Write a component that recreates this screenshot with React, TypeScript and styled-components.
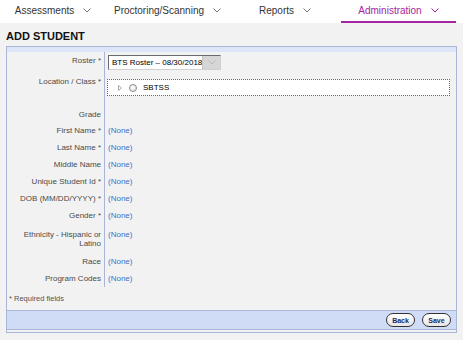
import * as React from 'react';
import styled, { createGlobalStyle } from 'styled-components';

const GlobalStyle = createGlobalStyle`
  html, body {
    margin: 0;
    padding: 0;
    background: #f2f2f2;
  }
  body {
    font-family: "Liberation Sans", Arial, sans-serif;
    color: #333;
  }
`;

const Nav = styled('nav')`
  display: grid;
  grid-template-columns: 106px 123px 112px 115px 7px;
  height: 23px;
  background: #fff;
`;

const NavItem = styled('div')<{ $active?: boolean }>`
  display: flex;
  align-items: center;
  justify-content: center;
  gap: 9px;
  box-sizing: border-box;
  padding-bottom: 1px;
  font-size: 10px;
  color: ${p => (p.$active ? '#a4259f' : '#333')};
  border-bottom: 2px solid ${p => (p.$active ? '#a4259f' : 'transparent')};
`;

const Title = styled('h1')`
  margin: 0;
  padding: 6px 6px 0;
  font-size: 11px;
  line-height: 14px;
  font-weight: bold;
  color: #111;
`;

const Panel = styled('div')`
  margin: 3px 0 0 6px;
  width: 451px;
  box-sizing: border-box;
  border: 1px solid #a9b6d6;
`;

const TopStrip = styled('div')`
  height: 5px;
  background: #dde6f8;
`;

const Row = styled('div')`
  display: flex;
`;

const Label = styled('div')<{ $pt: number }>`
  width: 97px;
  flex: none;
  box-sizing: border-box;
  padding: ${p => p.$pt}px 3px 0 4px;
  text-align: right;
  font-size: 8px;
  line-height: 9px;
  color: #4a4a4a;
`;

const Value = styled('div')<{ $pt: number; $pb: number }>`
  flex: 1;
  min-height: 9px;
  border-left: 1px solid #a9b6d6;
  padding: ${p => p.$pt}px 0 ${p => p.$pb}px 3px;
  font-size: 8px;
  line-height: 9px;
  color: #3b73c8;
`;

const RosterSelect = styled('div')`
  display: flex;
  width: 113px;
  height: 15px;
  box-sizing: border-box;
  border: 1px solid;
  border-color: #6a6a6a #d0d0d0 #d0d0d0 #6a6a6a;
  background: #fff;
`;

const SelectText = styled('div')`
  flex: 1;
  padding-left: 3px;
  font-size: 8px;
  line-height: 13px;
  color: #000;
  white-space: nowrap;
`;

const DropButton = styled('div')`
  width: 18px;
  display: flex;
  align-items: center;
  justify-content: center;
  background: #d6d6d6;
  border-left: 1px solid #c4c4c4;
`;

const LocationBox = styled('div')`
  display: flex;
  align-items: center;
  height: 17px;
  box-sizing: border-box;
  margin: 0 6px 0 -1px;
  padding-left: 10px;
  gap: 4px;
  border: 1px dotted #666;
  background: #fff;
  font-size: 8px;
  color: #000;
`;

const Circle = styled('span')`
  width: 6px;
  height: 6px;
  border-radius: 50%;
  border: 1px solid #8a8a8a;
  background: radial-gradient(circle at 40% 40%, #fff, #ddd);
  margin: 0 2px 0 3px;
`;

const Note = styled('div')`
  margin: 7px 0 7px;
  padding-left: 2px;
  font-size: 7.5px;
  line-height: 9px;
  color: #555;
`;

const Footer = styled('div')`
  display: flex;
  justify-content: flex-end;
  align-items: center;
  gap: 7px;
  height: 18px;
  padding-right: 5px;
  margin-bottom: 2px;
  background: #d0dcf5;
  border-top: 1px solid #a9b6d6;
  border-bottom: 1px solid #a9b6d6;
`;

const Button = styled('button')`
  width: 29px;
  height: 14px;
  padding: 0;
  border: 1px solid #333;
  border-radius: 8px;
  background: linear-gradient(#ffffff, #e6e6e6);
  font-family: "Liberation Sans", Arial, sans-serif;
  font-size: 7px;
  font-weight: bold;
  color: #1b2a6b;
`;

const Chevron = ({ color }: { color: string }) => (
  <svg width="8" height="5" viewBox="0 0 8 5">
    <polyline points="0.5,0.5 4,4 7.5,0.5" fill="none" stroke={color} strokeWidth="1" />
  </svg>
);

const navItems = ['Assessments', 'Proctoring/Scanning', 'Reports', 'Administration'];

const fields: [string, number, number, number][] = [
  ['First Name *', 4, 4, 4],
  ['Last Name *', 4, 4, 4],
  ['Middle Name', 4, 4, 4],
  ['Unique Student Id *', 4, 4, 4],
  ['DOB (MM/DD/YYYY) *', 4, 4, 4],
  ['Gender *', 4, 4, 4],
  ['Ethnicity - Hispanic or Latino', 6, 6, 14],
  ['Race', 4, 4, 4],
  ['Program Codes', 4, 4, 4],
];

const App = () => {
  return (
    <>
      <GlobalStyle />
      <Nav>
        {navItems.map((name, i) => (
          <NavItem key={name} $active={i === 3}>
            {name}
            <Chevron color={i === 3 ? '#a4259f' : '#777'} />
          </NavItem>
        ))}
      </Nav>
      <Title>ADD STUDENT</Title>
      <Panel>
        <TopStrip />
        <Row>
          <Label $pt={4}>Roster *</Label>
          <Value $pt={3} $pb={2}>
            <RosterSelect>
              <SelectText>BTS Roster – 08/30/2018</SelectText>
              <DropButton>
                <Chevron color="#b8b8b8" />
              </DropButton>
            </RosterSelect>
          </Value>
        </Row>
        <Row>
          <Label $pt={5}>Location / Class *</Label>
          <Value $pt={7} $pb={10}>
            <LocationBox>
              <svg width="4" height="6" viewBox="0 0 4 6">
                <polygon points="0.5,0.5 3.5,3 0.5,5.5" fill="#fff" stroke="#aaa" strokeWidth="1" />
              </svg>
              <Circle />
              SBTSS
            </LocationBox>
          </Value>
        </Row>
        <Row>
          <Label $pt={4}>Grade</Label>
          <Value $pt={4} $pb={3} />
        </Row>
        {fields.map(([label, lpt, vpt, vpb]) => (
          <Row key={label}>
            <Label $pt={lpt}>{label}</Label>
            <Value $pt={vpt} $pb={vpb}>(None)</Value>
          </Row>
        ))}
        <Note>* Required fields</Note>
        <Footer>
          <Button>Back</Button>
          <Button>Save</Button>
        </Footer>
      </Panel>
    </>
  );
};

export default App;
